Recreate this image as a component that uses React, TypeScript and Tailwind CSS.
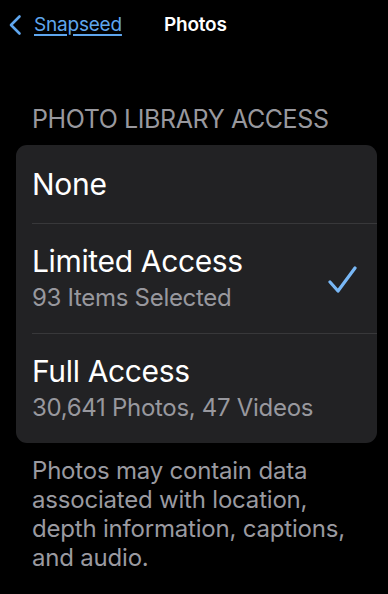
import React from "react";

const font = { fontFamily: "Inter, 'Noto Sans', sans-serif" };

function Chevron() {
  return (
    <svg width="16" height="22" viewBox="0 0 16 22" fill="none">
      <path
        d="M12.5 2.5 L4 11 L12.5 19.5"
        stroke="#5fa6ee"
        strokeWidth="2.6"
        strokeLinecap="round"
        strokeLinejoin="round"
      />
    </svg>
  );
}

function Check() {
  return (
    <svg width="30" height="30" viewBox="0 0 30 30" fill="none">
      <path
        d="M2 17 L10 26 L27 3"
        stroke="#78b7f5"
        strokeWidth="3.2"
        strokeLinecap="round"
        strokeLinejoin="round"
      />
    </svg>
  );
}

export default function App() {
  return (
    <div
      className="w-[388px] h-[594px] bg-black overflow-hidden text-white"
      style={font}
    >
      <div className="flex items-center h-[50px] pl-[7px]">
        <Chevron />
        <span className="ml-[11px] text-[19px] text-[#5fa6ee] underline underline-offset-[3px] decoration-[1.5px] tracking-[-0.2px]">
          Snapseed
        </span>
        <span className="ml-[42px] text-[19px] font-semibold tracking-[-0.2px]">
          Photos
        </span>
      </div>

      <div className="mt-[54px] pl-[32px] text-[25px] leading-[30px] text-[#98989e] tracking-[-0.4px]">
        PHOTO LIBRARY ACCESS
      </div>

      <div className="ml-[16px] w-[361px] mt-[11px] rounded-[11px] bg-[#222224] overflow-hidden">
        <div className="h-[78px] pl-[16px] flex items-center text-[30px] tracking-[-0.3px]">
          None
        </div>
        <div className="ml-[16px] h-px bg-[#38383a]" />
        <div className="h-[109px] pl-[16px] pr-[19px] flex items-center justify-between">
          <div className="flex flex-col gap-[6px] mt-[-2px]">
            <span className="text-[30px] leading-[34px] tracking-[-0.35px]">
              Limited Access
            </span>
            <span className="text-[24px] leading-[28px] text-[#98989e] tracking-[-0.3px]">
              93 Items Selected
            </span>
          </div>
          <div className="mt-[2px]">
            <Check />
          </div>
        </div>
        <div className="ml-[16px] h-px bg-[#38383a]" />
        <div className="h-[109px] pl-[16px] flex flex-col justify-center">
          <div className="flex flex-col gap-[6px] mt-[-2px]">
            <span className="text-[30px] leading-[34px] tracking-[-0.35px]">
              Full Access
            </span>
            <span className="text-[24px] leading-[28px] text-[#98989e] tracking-[-0.3px]">
              30,641 Photos, 47 Videos
            </span>
          </div>
        </div>
      </div>

      <p className="mt-[13px] pl-[32px] pr-[24px] text-[24px] leading-[29px] text-[#9a9aa0] tracking-[-0.2px]">
        Photos may contain data associated with location, depth information,
        captions, and audio.
      </p>
    </div>
  );
}
